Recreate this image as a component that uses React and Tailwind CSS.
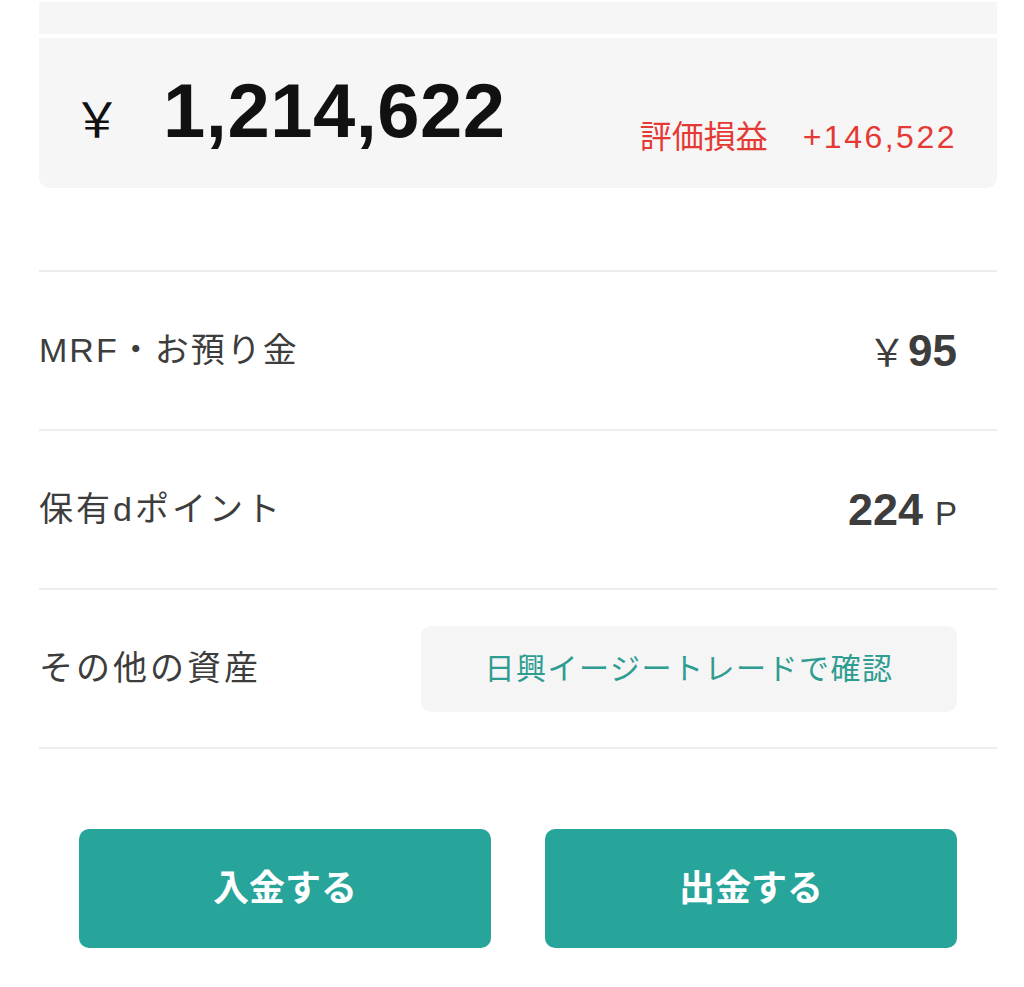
export default function App() {
  const font = { fontFamily: '"Liberation Sans", "Noto Sans CJK JP", sans-serif' };
  const cjk = { fontFamily: '"Noto Sans CJK JP", "Liberation Sans", sans-serif' };
  return (
    <div className="w-[1024px] h-[987px] bg-white overflow-hidden" style={font}>
      <div className="ml-[39px] w-[958px] flex flex-col">
        <div className="mt-[2px] h-[32px] bg-[#f6f6f6]" />
        <div className="mt-[4px] h-[150px] bg-[#f6f6f6] rounded-b-[10px] flex items-end justify-between pl-[34px] pr-[40px]">
          <div className="flex items-baseline pb-[39px] leading-none">
            <span className="text-[48px] text-[#111]" style={cjk}>￥</span>
            <span className="ml-[42px] text-[76px] font-bold text-[#111] tracking-[0.5px]">1,214,622</span>
          </div>
          <div className="flex items-baseline pb-[35px] leading-none text-[32px] text-[#e53935]">
            <span>評価損益</span>
            <span className="ml-[35px] tracking-[2.5px]">+146,522</span>
          </div>
        </div>
        <div className="h-[82px]" />
        <div className="border-t-2 border-[#ededed] h-[159px] flex items-center justify-between pr-[40px]">
          <span className="text-[34px] tracking-[2px] text-[#3d3d3d]">MRF・お預り金</span>
          <span className="flex items-baseline text-[#3d3d3d]">
            <span className="text-[38px]" style={cjk}>￥</span>
            <span className="ml-[2px] text-[44px] font-bold">95</span>
          </span>
        </div>
        <div className="border-t-2 border-[#ededed] h-[159px] flex items-center justify-between pr-[40px]">
          <span className="text-[34px] tracking-[3px] text-[#3d3d3d]">保有dポイント</span>
          <span className="flex items-baseline text-[#3d3d3d]">
            <span className="text-[45px] font-bold">224</span>
            <span className="ml-[12px] text-[33px]">P</span>
          </span>
        </div>
        <div className="border-t-2 border-[#ededed] h-[159px] flex items-center justify-between pr-[40px]">
          <span className="text-[34px] tracking-[3px] text-[#3d3d3d]">その他の資産</span>
          <div className="w-[536px] h-[86px] bg-[#f5f5f5] rounded-[10px] flex items-center justify-center text-[30px] tracking-[1.5px] text-[#2f9c92]">
            日興イージートレードで確認
          </div>
        </div>
        <div className="border-t-2 border-[#ededed]" />
        <div className="mt-[80px] px-[40px] grid grid-cols-2 gap-[54px]">
          <button className="h-[119px] bg-[#27a59a] rounded-[10px] text-white text-[36px] font-bold flex items-center justify-center">
            入金する
          </button>
          <button className="h-[119px] bg-[#27a59a] rounded-[10px] text-white text-[36px] font-bold flex items-center justify-center">
            出金する
          </button>
        </div>
      </div>
    </div>
  );
}
